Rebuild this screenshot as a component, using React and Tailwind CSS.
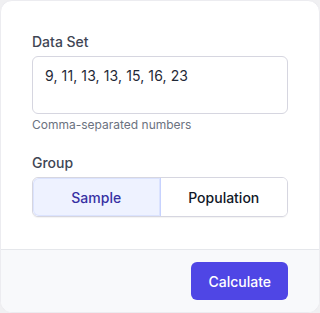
import React, { useState } from "react";

export default function App() {
  const [group, setGroup] = useState("sample");
  return (
    <div className="w-[320px] h-[313px] bg-[#f0f0f2]" style={{ fontFamily: "Inter, 'Noto Sans', sans-serif" }}>
      <div className="w-full h-full bg-white rounded-xl overflow-hidden flex flex-col border border-[#ececf0]">
        <div className="flex-1 px-[31px] pt-[31px] pb-8">
          <label className="block text-sm leading-5 font-medium text-[#3f4654]">Data Set</label>
          <textarea
            className="mt-1 block w-full h-[58px] resize-none rounded-md border border-[#d6d6e0] px-3 py-[9px] text-[14px] leading-5 tracking-[0.1px] text-[#1f2937] outline-none"
            defaultValue="9, 11, 13, 13, 15, 16, 23"
          />
          <p className="mt-[3px] text-xs leading-4 text-[#6b7280]">Comma-separated numbers</p>
          <label className="mt-5 block text-sm leading-5 font-medium text-[#3f4654]">Group</label>
          <div className="mt-1 flex h-10 rounded-md border border-[#d6d6e0] shadow-[0_1px_1px_rgba(0,0,0,0.05)] overflow-hidden">
            <button
              onClick={() => setGroup("sample")}
              className="flex-1 bg-[#eef2ff] border-r border-[#c7d2fe] text-[14px] font-medium text-[#3730a3] rounded-l-md shadow-[inset_0_0_0_1px_#dbe3fe]"
            >
              Sample
            </button>
            <button
              onClick={() => setGroup("population")}
              className="flex-1 bg-white text-[14px] font-medium text-[#111827]"
            >
              Population
            </button>
          </div>
        </div>
        <div className="h-[63px] border-t border-[#e5e7eb] bg-[#f8f9fb] flex items-center justify-end px-[31px]">
          <button className="h-[38px] px-[17px] rounded-md bg-[#4f46e5] text-white text-[14px] font-medium">
            Calculate
          </button>
        </div>
      </div>
    </div>
  );
}
